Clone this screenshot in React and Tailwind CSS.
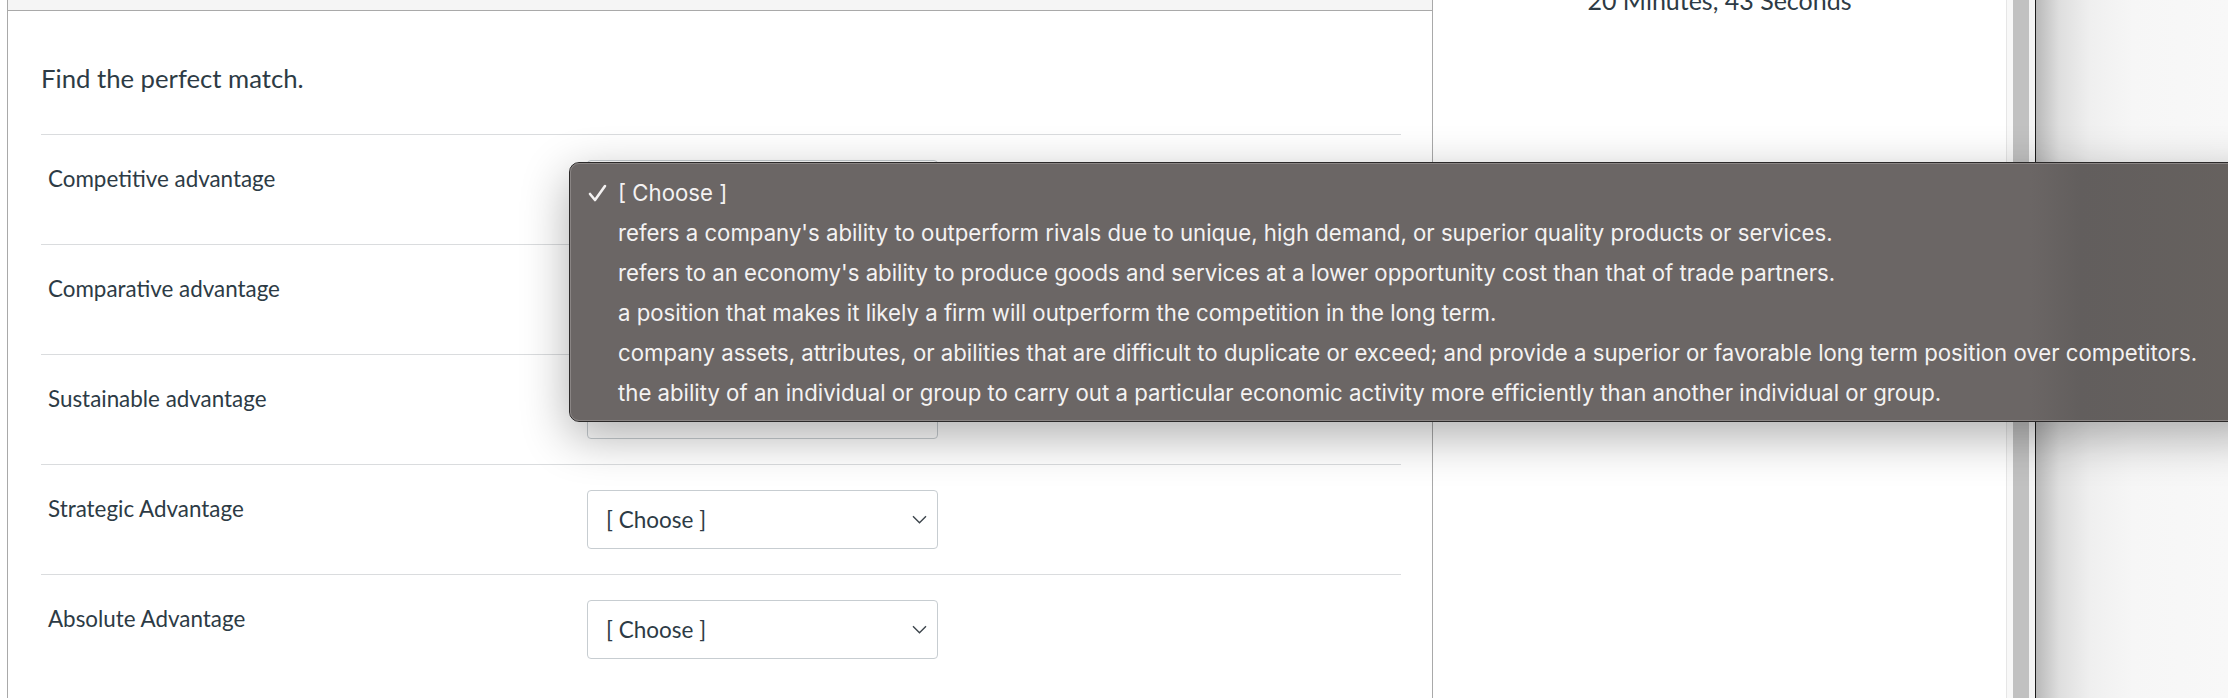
import React from 'react';

const ROWS = [
  'Competitive advantage',
  'Comparative advantage',
  'Sustainable advantage',
  'Strategic Advantage',
  'Absolute Advantage',
];

const OPTIONS = [
  "refers a company's ability to outperform rivals due to unique, high demand, or superior quality products or services.",
  "refers to an economy's ability to produce goods and services at a lower opportunity cost than that of trade partners.",
  'a position that makes it likely a firm will outperform the competition in the long term.',
  'company assets, attributes, or abilities that are difficult to duplicate or exceed; and provide a superior or favorable long term position over competitors.',
  'the ability of an individual or group to carry out a particular economic activity more efficiently than another individual or group.',
];

const Select = () => (
  <div className="w-[351px] h-[59px] mt-[25px] border border-[#c7cdd1] rounded-[4px] bg-white flex items-center justify-between pl-[18px] pr-[10px]">
    <span className="text-[22.5px] text-[#2d3b45]">[ Choose ]</span>
    <svg width="15" height="9" viewBox="0 0 15 9" fill="none">
      <path d="M1 1.2 L7.5 7.8 L14 1.2" stroke="#3d454c" strokeWidth="1.4" />
    </svg>
  </div>
);

const App = () => {
  return (
    <div className="relative w-[2228px] h-[698px] overflow-hidden bg-white flex font-['Lato','Noto_Sans',sans-serif]">
      {/* quiz panel */}
      <div className="ml-[7px] w-[1426px] h-full border-l border-r border-[#a9a9a9] flex flex-col">
        <div className="h-[11px] bg-[#f5f5f5] border-b border-[#a9a9a9]" />
        <div className="pl-[33px] pr-[31px]">
          <h2 className="mt-[49px] text-[25.7px] leading-[36px] text-[#2d3b45]">Find the perfect match.</h2>
          <div className="mt-[38px]">
            {ROWS.map((label) => (
              <div key={label} className="h-[110px] border-t border-[#dadcde] flex">
                <div className="w-[546px] pl-[7px] pt-[29px] text-[22.4px] leading-[30px] text-[#2d3b45]">{label}</div>
                <Select />
              </div>
            ))}
          </div>
        </div>
      </div>

      {/* timer column */}
      <div className="w-[573px] h-full flex justify-center">
        <p className="-mt-[15px] text-[25px] leading-[30px] text-[#2d3b45]">20 Minutes, 43 Seconds</p>
      </div>

      {/* scrollbar */}
      <div className="w-[30px] h-full flex border-l border-[#e6e6e6] bg-[#f8f8f8]">
        <div className="w-[6px]" />
        <div className="w-[16px] bg-[#c1c1c1]" />
        <div className="w-[6px] bg-[#f4f4f4]" />
        <div className="w-[1px] bg-[#1a1a1a]" />
      </div>

      {/* window behind */}
      <div className="flex-1 h-full bg-[linear-gradient(to_right,#b9b9b9,#dedede_12%,#efefef_28%,#f6f6f6_50%,#f8f8f8)]" />

      {/* open dropdown menu */}
      <div className="absolute left-[569px] top-[162px] w-[1700px] h-[260px] rounded-[10px] border border-[#2b2929] shadow-[0_14px_48px_rgba(0,0,0,0.32)] bg-[linear-gradient(to_right,#6b6665_0%,#6b6665_86%,#625e5d_89%,#67625f)] py-[10px] font-['Inter','Liberation_Sans',sans-serif] text-[#f4f2f2] text-[22.2px]">
        <div className="absolute inset-0 rounded-[9px] border border-[#8a8584] pointer-events-none" />
        <div className="h-[40px] flex items-center">
          <span className="w-[48px] flex justify-end pr-[11px]">
            <svg width="19" height="18" viewBox="0 0 19 18" fill="none">
              <path d="M2 10 L7 16 L17 2" stroke="#f4f2f2" strokeWidth="2.6" strokeLinecap="round" strokeLinejoin="round" />
            </svg>
          </span>
          <span>[ Choose ]</span>
        </div>
        {OPTIONS.map((o) => (
          <div key={o} className="h-[40px] flex items-center pl-[48px] whitespace-nowrap">{o}</div>
        ))}
      </div>
    </div>
  );
};

export default App;
